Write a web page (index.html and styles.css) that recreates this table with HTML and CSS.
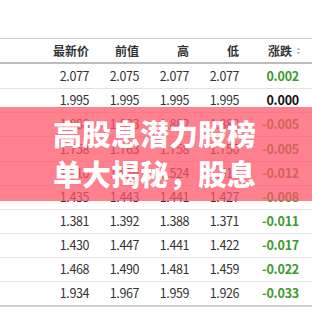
FILE: index.html
```html
<!DOCTYPE html>
<html lang="zh">
<head>
<meta charset="utf-8">
<link rel="stylesheet" href="styles.css">
</head>
<body>
<div class="page">
  <div class="table">
    <div class="row head">
      <span></span><span>最新价</span><span>前值</span><span>高</span><span>低</span>
      <span class="sort">涨跌<svg class="sort-ic" width="5" height="8" viewBox="0 0 5 8"><path d="M2.5 0.5 L4.5 3 H0.5 Z M2.5 7.5 L4.5 5 H0.5 Z" fill="#bbb"/></svg></span>
    </div>
    <div class="row tall"><span></span><span>2.077</span><span>2.075</span><span>2.077</span><span>2.077</span><span class="chg up">0.002</span></div>
    <div class="row"><span></span><span>1.995</span><span>1.995</span><span>1.995</span><span>1.995</span><span class="chg flat">0.000</span></div>
    <div class="row"><span></span><span>1.888</span><span>1.893</span><span>1.882</span><span>1.880</span><span class="chg up">-0.005</span></div>
    <div class="row tall"><span></span><span>1.758</span><span>1.763</span><span>1.758</span><span>1.750</span><span class="chg up">-0.005</span></div>
    <div class="row"><span></span><span>1.510</span><span>1.536</span><span>1.524</span><span>1.510</span><span class="chg up">-0.012</span></div>
    <div class="row"><span></span><span>1.435</span><span>1.443</span><span>1.441</span><span>1.427</span><span class="chg up">-0.008</span></div>
    <div class="row"><span></span><span>1.381</span><span>1.392</span><span>1.388</span><span>1.371</span><span class="chg up">-0.011</span></div>
    <div class="row"><span></span><span>1.430</span><span>1.447</span><span>1.441</span><span>1.422</span><span class="chg up">-0.017</span></div>
    <div class="row"><span></span><span>1.468</span><span>1.490</span><span>1.481</span><span>1.459</span><span class="chg up">-0.022</span></div>
    <div class="row last"><span></span><span>1.934</span><span>1.967</span><span>1.959</span><span>1.926</span><span class="chg up">-0.033</span></div>
  </div>
  <div class="banner">
    <div class="title">高股息潜力股榜单大揭秘，股息</div>
  </div>
</div>
</body>
</html>
```
FILE: styles.css
```css
html, body {
  margin: 0;
  padding: 0;
  background: #fff;
}
.page {
  position: relative;
  width: 312px;
  height: 312px;
  overflow: hidden;
  font-family: "Noto Sans CJK SC", "Noto Sans", sans-serif;
  color: #333;
}
.table {
  padding-top: 38px;
}
.row {
  display: grid;
  grid-template-columns: 40px 50px 50px 50px 50px 1fr;
  height: 23px;
  border-bottom: 1px solid #e2e2e2;
  align-items: center;
  font-size: 12.5px;
  letter-spacing: -0.4px;
}
.row.tall {
  height: 24px;
}
.row span {
  text-align: right;
  padding-right: 1px;
  line-height: 1;
}
.row .chg {
  padding-right: 13px;
  font-weight: bold;
  letter-spacing: -0.2px;
}
.chg.up { color: #3b9a2e; }
.chg.flat { color: #111; }
.head {
  border-top: 1px solid #cfcfcf;
  border-bottom: 2px solid #bcbcbc;
  height: 23px;
  font-size: 12px;
  font-weight: 600;
  letter-spacing: 0;
}
.head .sort {
  padding-right: 11px;
  display: flex;
  justify-content: flex-end;
  align-items: center;
  gap: 4px;
}
.sort-ic {
  display: block;
}
.row.last {
  border-bottom: 2px solid #cfcfcf;
}
.banner {
  position: absolute;
  left: 0;
  top: 107px;
  width: 312px;
  height: 94px;
  background: rgba(255, 84, 102, 0.74);
  display: flex;
  justify-content: center;
}
.title {
  width: 206px;
  padding-top: 6px;
  font-size: 29px;
  line-height: 40px;
  font-weight: 900;
  color: #fff;
  letter-spacing: 0;
  text-shadow: 0 0 1px rgba(180, 40, 60, 0.3);
}
```
